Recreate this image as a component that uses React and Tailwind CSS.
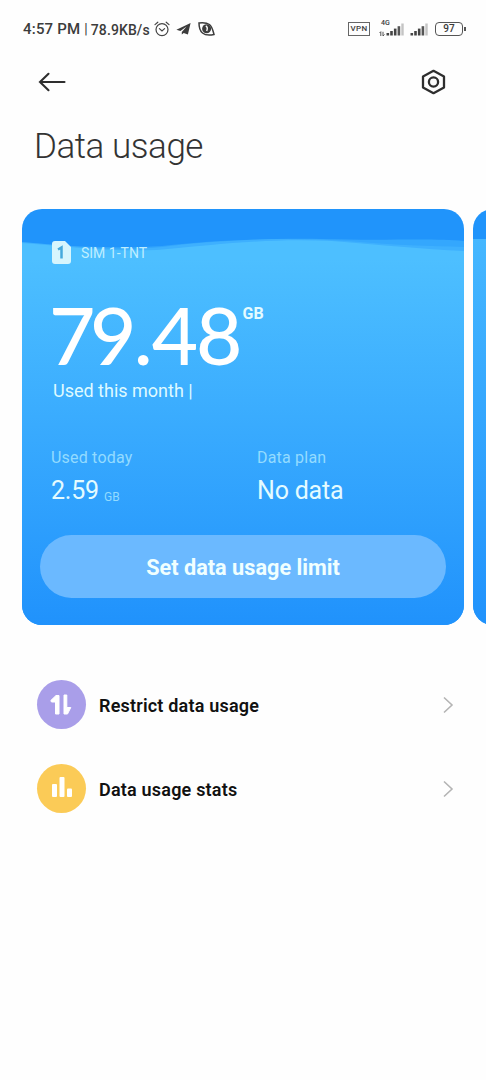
import React from 'react';

function SignalBars({ className }) {
    return (
        <svg className={className} width="19" height="13" viewBox="0 0 19 13">
            <rect x="0.5" y="10" width="2.6" height="2.5" fill="#444" />
            <rect x="4.2" y="8" width="2.6" height="4.5" fill="#444" />
            <rect x="7.9" y="5.6" width="2.6" height="6.9" fill="#444" />
            <rect x="11.6" y="3.2" width="2.6" height="9.3" fill="#555" />
            <rect x="15.3" y="0.5" width="2.4" height="12" fill="#c4c4c4" />
        </svg>
    );
}

function StatusBar() {
    return (
        <div className="flex h-[58px] items-center pl-[23px] pr-[20px] text-[#3c3c3c]">
            <span className="pt-[1px] text-[15px] font-medium leading-none tracking-[0.2px]">4:57 PM</span>
            <span className="ml-[4px] text-[14px] leading-none">|</span>
            <span className="ml-[3px] pt-[1px] text-[14px] font-medium leading-none tracking-[0.1px]">78.9KB/s</span>
            <svg className="ml-[4px]" width="16" height="16" viewBox="0 0 16 16" fill="none" stroke="#444" strokeWidth="1.2" strokeLinecap="round">
                <circle cx="8" cy="8.6" r="6" />
                <path d="M5.4 7.6 8 10l2.6-2.4M1 3.6 3.8 1.2M15 3.6 12.2 1.2" />
            </svg>
            <svg className="ml-[6px]" width="15" height="14" viewBox="0 0 15 14" fill="#3c3c3c">
                <path d="M14.6 1 0.4 7.8l4 1.2 6.200-4.400-4.800 5.300v2.600l1.900-1.600 4.200 1.700z" />
            </svg>
            <svg className="ml-[7px]" width="17" height="14" viewBox="0 0 17 14">
                <path d="M1 1c4-.4 7.500-.5 10.500 1.500C14 4.200 14.500 7 16 12.500c-4 .8-8.500 1-11.500-1.500C1.500 8.500 1 5 1 1z" fill="none" stroke="#3c3c3c" strokeWidth="1.5" />
                <circle cx="8.600" cy="6.800" r="4.500" fill="#3c3c3c" />
                <path d="M7.800 4c1.300.6 1.800 2.700.9 4.900" stroke="#fff" strokeWidth="1.400" fill="none" />
            </svg>

            <div className="ml-auto flex items-center">
                <span className="flex h-[14px] w-[22px] items-center justify-center border-[1.5px] border-[#666] text-[8px] font-medium leading-none tracking-[0.3px]">VPN</span>
                <div className="relative ml-[9px] h-[18px] w-[26px]">
                    <span className="absolute left-[2px] top-0 text-[7px] font-medium leading-none">4G</span>
                    <svg className="absolute bottom-[1px] left-0" width="6" height="6" viewBox="0 0 6 6" fill="none" stroke="#555" strokeWidth="1">
                        <path d="M.5 2 1.800.7V5M5.500 3.500 4 5V.8" />
                    </svg>
                    <SignalBars className="absolute right-0 top-[3px]" />
                </div>
                <SignalBars className="ml-[5px]" />
                <div className="ml-[6px] flex h-[14px] w-[28px] items-center justify-center rounded-[4px] border-[1.5px] border-[#555] text-[10px] font-medium leading-none">97</div>
                <div className="ml-[1px] h-[4px] w-[2px] bg-[#555]" />
            </div>
        </div>
    );
}

function Waves() {
    return (
        <svg className="absolute left-0 top-[26px]" width="442" height="25" viewBox="0 0 442 25" fill="#4dbfff">
            <path fillOpacity="0.45" d="M0 7C40 10 90 17 140 12C190 6 240 3 300 4C360 6 410 3 442 6V25H0z" />
            <path fillOpacity="0.4" d="M0 7C40 11 90 14 140 11C200 4 270 2 325 6C370 10 410 11 442 12V25H0z" />
            <path d="M0 8C50 12 90 17 135 15C200 9 250 3 310 6C360 10 400 14 442 16V25H0z" />
        </svg>
    );
}

function UsageCard() {
    return (
        <div className="relative flex h-[416px] w-[442px] shrink-0 flex-col overflow-hidden rounded-[20px] bg-[#2094fb]">
            <Waves />
            <div className="absolute inset-x-0 bottom-0 top-[50px] bg-gradient-to-b from-[#4dbfff] to-[#2092fc]" />

            <div className="relative flex flex-1 flex-col">
                <div className="mt-[32px] flex h-[23px] items-center pl-[30px]">
                    <svg width="19" height="23" viewBox="0 0 19 23">
                        <path d="M3 0h10l6 6v14a3 3 0 0 1-3 3H3a3 3 0 0 1-3-3V3a3 3 0 0 1 3-3z" fill="#d6f5fd" />
                        <path d="M6 8.500 9.500 6.500V17.500" fill="none" stroke="#45a9dc" strokeWidth="2.500" />
                    </svg>
                    <span className="ml-[10px] text-[14px] leading-none text-[#bfeeff]">SIM 1-TNT</span>
                </div>

                <div className="mt-[30px] flex h-[80px] items-start pl-[27px] text-white">
                    <span className="flex font-[Lato] text-[80px] font-medium leading-[80px]">
                        <span className="tracking-[-5.500px]">79</span>
                        <span className="ml-[3px]">.</span>
                        <span className="ml-[-1px] tracking-[-2px]">48</span>
                    </span>
                    <span className="ml-[2px] mt-[12px] text-[16px] font-bold leading-none text-[#e4fbff]">GB</span>
                </div>
                <div className="mt-[8px] pl-[31px] text-[18px] leading-none text-[#dffaff]">Used this month |</div>

                <div className="mt-[50px] grid grid-cols-[206px_1fr] pl-[29px]">
                    <div>
                        <div className="text-[16px] leading-none tracking-[0.2px] text-[#93dbff]">Used today</div>
                        <div className="mt-[12px] flex items-baseline text-[#e4fbff]">
                            <span className="text-[25px] leading-none tracking-[-0.2px]">2.59</span>
                            <span className="relative top-[2px] ml-[5px] text-[12px] leading-none text-[#93dbff]">GB</span>
                        </div>
                    </div>
                    <div>
                        <div className="text-[16px] leading-none tracking-[0.2px] text-[#93dbff]">Data plan</div>
                        <div className="mt-[12px] text-[25px] leading-none tracking-[-0.2px] text-[#e4fbff]">No data</div>
                    </div>
                </div>

                <button className="mx-[18px] mb-[27px] mt-auto h-[63px] rounded-full bg-[#6bb9ff] pt-[2px] text-[21.700px] font-bold leading-none text-[#f0ffff]">
                    Set data usage limit
                </button>
            </div>
        </div>
    );
}

function MenuRow({ color, icon, label }) {
    return (
        <div className="flex h-[49px] items-center pl-[37px] pr-[32px]">
            <div className={`flex size-[49px] items-center justify-center rounded-full ${color}`}>{icon}</div>
            <span className="ml-[13px] pt-[2px] text-[18px] font-semibold leading-none tracking-[0.2px] text-[#111]">{label}</span>
            <svg className="ml-auto" width="11" height="18" viewBox="0 0 11 18" fill="none" stroke="#b4b4b4" strokeWidth="1.600">
                <path d="M1 1.500 9 9l-8 7.500" />
            </svg>
        </div>
    );
}

export default function App() {
    return (
        <div className="h-[1080px] w-[486px] overflow-hidden bg-[#fefefe] font-[Roboto,sans-serif]">
            <StatusBar />

            <div className="flex h-[48px] items-center justify-between pl-[38px] pr-[40px]">
                <svg width="28" height="20" viewBox="0 0 28 20" fill="none" stroke="#2e2e2e" strokeWidth="2.100" strokeLinecap="round">
                    <path d="M26.500 10H2M10.500 1.800 2 10l8.500 8.200" />
                </svg>
                <svg width="25" height="26" viewBox="0 0 25 26" fill="none" stroke="#2e2e2e" strokeWidth="2.300" strokeLinejoin="round">
                    <path d="M12.500 1.800 23 7.500v11L12.500 24.200 2 18.500v-11z" />
                    <circle cx="12.500" cy="13" r="4.600" />
                </svg>
            </div>

            <h1 className="mt-[23px] pl-[34px] text-[35px] font-light leading-none tracking-[-0.450px] text-[#333]">Data usage</h1>

            <div className="mt-[45px] flex gap-[9px] pl-[22px]">
                <UsageCard />
                <div className="relative h-[416px] w-[442px] shrink-0 overflow-hidden rounded-[20px] bg-[#2094fb]">
                    <div className="absolute inset-x-0 bottom-0 top-[30px] bg-gradient-to-b from-[#45b7ff] to-[#2092fc]" />
                </div>
            </div>

            <div className="mt-[55px] flex flex-col gap-[35px]">
                <MenuRow
                    color="bg-[#a99ee9]"
                    label="Restrict data usage"
                    icon={
                        <svg width="23" height="22" viewBox="0 0 23 22" fill="#fff" stroke="#fff" strokeWidth="1" strokeLinejoin="round">
                            <path d="M.8 6.500 6 1.500H9v18.500H5.500V8H1.500z" />
                            <path d="M14 1h2.800v12.500h4L17.500 20H14z" />
                        </svg>
                    }
                />
                <MenuRow
                    color="bg-[#fbcb57]"
                    label="Data usage stats"
                    icon={
                        <svg className="mb-[3px]" width="22" height="22" viewBox="0 0 22 22" fill="#fff">
                            <rect x="1" y="8" width="5" height="13" rx="1" />
                            <rect x="8.500" y="1" width="5" height="20" rx="1" />
                            <rect x="16" y="12.500" width="5" height="8.500" rx="1" />
                        </svg>
                    }
                />
            </div>
        </div>
    );
}
